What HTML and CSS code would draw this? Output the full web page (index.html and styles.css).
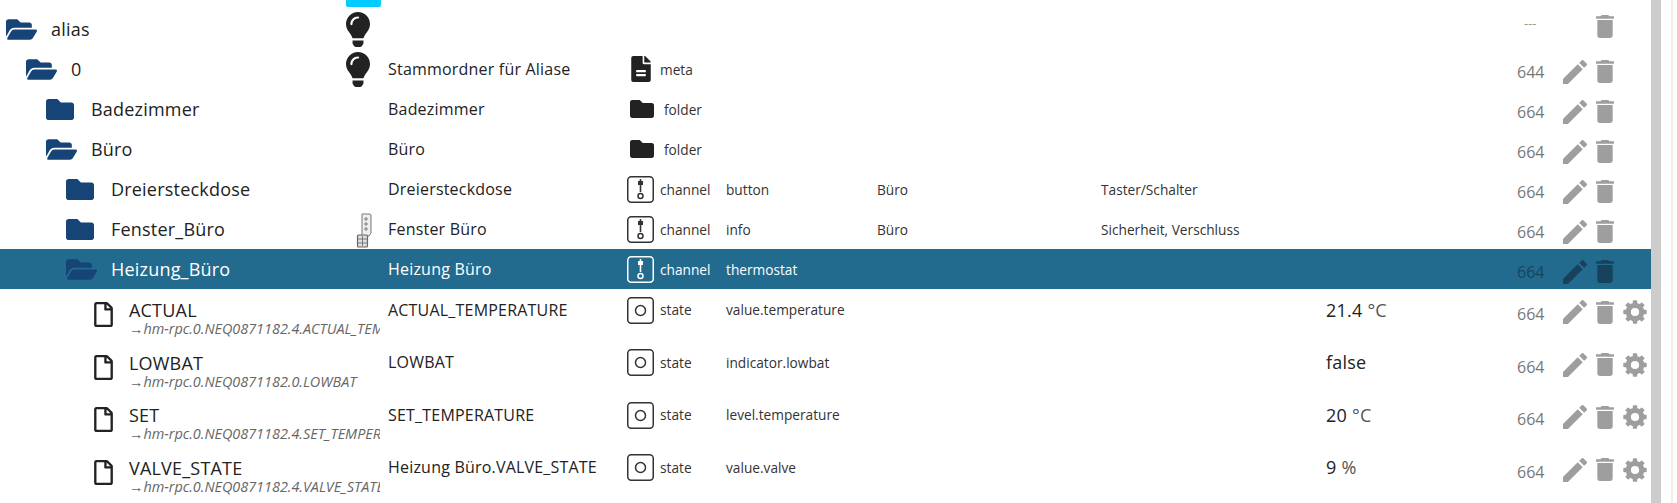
FILE: index.html
```html
<!DOCTYPE html>
<html lang="de">
<head>
<meta charset="utf-8">
<title>Objekte</title>
<link rel="stylesheet" href="styles.css">
</head>
<body>
<svg class="defs" aria-hidden="true">
  <defs>
    <symbol id="folder" viewBox="0 0 512 384"><path d="M464 64H272L208 0H48C21.49 0 0 21.49 0 48v288c0 26.51 21.49 48 48 48h416c26.51 0 48-21.49 48-48V112c0-26.51-21.49-48-48-48z"/></symbol>
    <symbol id="open" viewBox="0 64 576 384"><path d="M572.694 292.093L500.27 416.248A63.997 63.997 0 0 1 444.989 448H45.025c-18.523 0-30.064-20.093-20.731-36.093l72.424-124.155A64 64 0 0 1 152 256h399.964c18.523 0 30.064 20.093 20.73 36.093zM152 224h328v-48c0-26.51-21.49-48-48-48H272l-64-64H48C21.49 64 0 85.49 0 112v278.046l69.077-118.418C86.214 242.25 117.989 224 152 224z"/></symbol>
    <symbol id="file" viewBox="0 0 384 512"><path d="M369.9 97.9L286 14C277 5 264.8-.1 252.1-.1H48C21.5 0 0 21.5 0 48v416c0 26.5 21.5 48 48 48h288c26.5 0 48-21.5 48-48V131.9c0-12.7-5.1-25-14.1-34zM332.1 128H256V51.9l76.1 76.1zM48 464V48h160v104c0 13.3 10.7 24 24 24h104v288H48z"/></symbol>
    <symbol id="bulb" viewBox="0 0 352 512"><path d="M96.06 454.35c.01 6.29 1.87 12.45 5.36 17.69l17.09 25.69a31.99 31.99 0 0 0 26.64 14.28h61.71a31.99 31.99 0 0 0 26.64-14.28l17.09-25.69a31.989 31.989 0 0 0 5.36-17.69l.04-38.35H96.01l.05 38.35zM0 176c0 44.37 16.45 84.85 43.56 115.78 16.52 18.85 42.36 58.23 52.21 91.45.04.26.07.52.11.78h160.24c.04-.26.07-.51.11-.78 9.85-33.22 35.69-72.6 52.21-91.45C335.55 260.85 352 220.37 352 176 352 78.61 272.91-.3 175.45 0 73.44.31 0 82.97 0 176zm176-80c-44.11 0-80 35.89-80 80 0 8.84-7.16 16-16 16s-16-7.16-16-16c0-61.76 50.24-112 112-112 8.84 0 16 7.16 16 16s-7.16 16-16 16z"/></symbol>
    <symbol id="meta" viewBox="0 0 384 512"><path d="M224 136V0H40C18 0 0 18 0 40v432c0 22 18 40 40 40h304c22 0 40-18 40-40V160H248c-13.2 0-24-10.800-24-24zm64 250c0 6.600-5.400 12-12 12H108c-6.600 0-12-5.400-12-12v-22c0-6.600 5.400-12 12-12h168c6.600 0 12 5.400 12 12v22zm0-76c0 6.600-5.400 12-12 12H108c-6.600 0-12-5.400-12-12v-22c0-6.600 5.400-12 12-12h168c6.600 0 12 5.400 12 12v22zm96-189v7H256V0h6.100c6.400 0 12.500 2.500 17 7l97.900 98c4.500 4.500 7 10.600 7 16z"/></symbol>
    <symbol id="channel" viewBox="0 0 27 27"><rect x=".75" y=".75" width="25.5" height="25.5" rx="3.5" fill="none" stroke="currentColor" stroke-width="1.5"/><rect x="11" y="5" width="5" height="4" fill="currentColor"/><path d="M13.5 3v13" stroke="currentColor" stroke-width="1.6"/><circle cx="13.5" cy="20" r="2.5" fill="none" stroke="currentColor" stroke-width="1.5"/></symbol>
    <symbol id="state" viewBox="0 0 27 27"><rect x=".75" y=".75" width="25.5" height="25.5" rx="3.500" fill="none" stroke="currentColor" stroke-width="1.5"/><circle cx="13.5" cy="13.5" r="5" fill="none" stroke="currentColor" stroke-width="1.5"/></symbol>
    <symbol id="edit" viewBox="3 3 18 18"><path d="M3 17.25V21h3.75L17.81 9.94l-3.75-3.75L3 17.25zM20.71 7.04c.39-.39.39-1.02 0-1.41l-2.34-2.34c-.39-.39-1.02-.39-1.41 0l-1.83 1.83 3.75 3.75 1.83-1.83z"/></symbol>
    <symbol id="trash" viewBox="5 3 14 18"><path d="M6 19c0 1.1.9 2 2 2h8c1.1 0 2-.9 2-2V7H6v12zM19 4h-3.5l-1-1h-5l-1 1H5v2h14V4z"/></symbol>
    <symbol id="gear" viewBox="0 0 24 24">
      <circle cx="12" cy="12" r="6.7" fill="none" stroke="currentColor" stroke-width="5.2"/>
      <g fill="currentColor">
        <rect x="9.800" y=".3" width="4.400" height="4.500" rx=".7"/>
        <rect x="9.800" y=".3" width="4.400" height="4.500" rx=".7" transform="rotate(45 12 12)"/>
        <rect x="9.800" y=".3" width="4.400" height="4.500" rx=".7" transform="rotate(90 12 12)"/>
        <rect x="9.800" y=".3" width="4.400" height="4.500" rx=".7" transform="rotate(135 12 12)"/>
        <rect x="9.800" y=".3" width="4.400" height="4.500" rx=".7" transform="rotate(180 12 12)"/>
        <rect x="9.800" y=".3" width="4.400" height="4.500" rx=".7" transform="rotate(225 12 12)"/>
        <rect x="9.800" y=".3" width="4.400" height="4.500" rx=".7" transform="rotate(270 12 12)"/>
        <rect x="9.800" y=".3" width="4.400" height="4.500" rx=".7" transform="rotate(315 12 12)"/>
      </g>
    </symbol>
  </defs>
</svg>
<div class="page">
<main class="tree">
  <div class="top"><span class="badge"></span></div>

  <div class="row">
    <div class="id l0"><svg class="ic-open"><use href="#open"/></svg><span>alias</span></div>
    <div class="devicon"><svg class="ic-bulb"><use href="#bulb"/></svg></div>
    <div class="title"></div><div class="ty"></div><div class="tt"></div><div class="role"></div><div class="room"></div><div class="fn"></div><div class="val"></div>
    <div class="acl dash">---</div>
    <div class="btns btns-up"><span class="sp"></span><svg class="ic-trash"><use href="#trash"/></svg></div>
  </div>

  <div class="row">
    <div class="id l1"><svg class="ic-open"><use href="#open"/></svg><span>0</span></div>
    <div class="devicon"><svg class="ic-bulb"><use href="#bulb"/></svg></div>
    <div class="title">Stammordner für Aliase</div>
    <div class="ty"><svg class="ic-meta"><use href="#meta"/></svg></div><div class="tt">meta</div><div class="role"></div><div class="room"></div><div class="fn"></div><div class="val"></div>
    <div class="acl">644</div>
    <div class="btns"><svg class="ic-edit"><use href="#edit"/></svg><svg class="ic-trash"><use href="#trash"/></svg></div>
  </div>

  <div class="row">
    <div class="id l2"><svg class="ic-folder"><use href="#folder"/></svg><span>Badezimmer</span></div>
    <div class="devicon"></div>
    <div class="title">Badezimmer</div>
    <div class="ty"><svg class="ic-tfolder"><use href="#folder"/></svg></div><div class="tt tt-f">folder</div><div class="role"></div><div class="room"></div><div class="fn"></div><div class="val"></div>
    <div class="acl">664</div>
    <div class="btns"><svg class="ic-edit"><use href="#edit"/></svg><svg class="ic-trash"><use href="#trash"/></svg></div>
  </div>

  <div class="row">
    <div class="id l2"><svg class="ic-open"><use href="#open"/></svg><span>Büro</span></div>
    <div class="devicon"></div>
    <div class="title">Büro</div>
    <div class="ty"><svg class="ic-tfolder"><use href="#folder"/></svg></div><div class="tt tt-f">folder</div><div class="role"></div><div class="room"></div><div class="fn"></div><div class="val"></div>
    <div class="acl">664</div>
    <div class="btns"><svg class="ic-edit"><use href="#edit"/></svg><svg class="ic-trash"><use href="#trash"/></svg></div>
  </div>

  <div class="row">
    <div class="id l3"><svg class="ic-folder"><use href="#folder"/></svg><span>Dreiersteckdose</span></div>
    <div class="devicon"></div>
    <div class="title">Dreiersteckdose</div>
    <div class="ty"><svg class="ic-box"><use href="#channel"/></svg></div><div class="tt">channel</div><div class="role">button</div><div class="room">Büro</div><div class="fn">Taster/Schalter</div><div class="val"></div>
    <div class="acl">664</div>
    <div class="btns"><svg class="ic-edit"><use href="#edit"/></svg><svg class="ic-trash"><use href="#trash"/></svg></div>
  </div>

  <div class="row">
    <div class="id l3"><svg class="ic-folder"><use href="#folder"/></svg><span>Fenster_Büro</span></div>
    <div class="devicon">
      <svg class="ic-window" viewBox="0 0 16 35">
        <path d="M6 1h8l1 1v18l-2 3H6z" fill="#eee" stroke="#777" stroke-width="1"/>
        <circle cx="10" cy="6" r="1.2" fill="none" stroke="#555" stroke-width=".8"/>
        <circle cx="10" cy="11" r="1.2" fill="none" stroke="#555" stroke-width=".8"/>
        <circle cx="10" cy="16" r="1.2" fill="none" stroke="#555" stroke-width=".8"/>
        <rect x="1.5" y="22" width="10" height="12" rx="1" fill="#ddd" stroke="#666" stroke-width="1.2"/>
        <path d="M2 26h9M2 30h9M6.500 23v10" stroke="#666" stroke-width=".8"/>
      </svg>
    </div>
    <div class="title">Fenster Büro</div>
    <div class="ty"><svg class="ic-box"><use href="#channel"/></svg></div><div class="tt">channel</div><div class="role">info</div><div class="room">Büro</div><div class="fn">Sicherheit, Verschluss</div><div class="val"></div>
    <div class="acl">664</div>
    <div class="btns"><svg class="ic-edit"><use href="#edit"/></svg><svg class="ic-trash"><use href="#trash"/></svg></div>
  </div>

  <div class="row selected">
    <div class="id l3"><svg class="ic-open"><use href="#open"/></svg><span>Heizung_Büro</span></div>
    <div class="devicon"></div>
    <div class="title">Heizung Büro</div>
    <div class="ty"><svg class="ic-box"><use href="#channel"/></svg></div><div class="tt">channel</div><div class="role">thermostat</div><div class="room"></div><div class="fn"></div><div class="val"></div>
    <div class="acl">664</div>
    <div class="btns"><svg class="ic-edit"><use href="#edit"/></svg><svg class="ic-trash"><use href="#trash"/></svg></div>
  </div>

  <div class="row state">
    <div class="id l4"><svg class="ic-file"><use href="#file"/></svg><div class="stack"><span>ACTUAL</span><em>→hm-rpc.0.NEQ0871182.4.ACTUAL_TEMPERATURE</em></div></div>
    <div class="devicon"></div>
    <div class="title">ACTUAL_TEMPERATURE</div>
    <div class="ty"><svg class="ic-box"><use href="#state"/></svg></div><div class="tt">state</div><div class="role">value.temperature</div><div class="room"></div><div class="fn"></div><div class="val">21.4 <small>°C</small></div>
    <div class="acl">664</div>
    <div class="btns"><svg class="ic-edit"><use href="#edit"/></svg><svg class="ic-trash"><use href="#trash"/></svg><svg class="ic-gear"><use href="#gear"/></svg></div>
  </div>

  <div class="row state">
    <div class="id l4"><svg class="ic-file"><use href="#file"/></svg><div class="stack"><span>LOWBAT</span><em>→hm-rpc.0.NEQ0871182.0.LOWBAT</em></div></div>
    <div class="devicon"></div>
    <div class="title">LOWBAT</div>
    <div class="ty"><svg class="ic-box"><use href="#state"/></svg></div><div class="tt">state</div><div class="role">indicator.lowbat</div><div class="room"></div><div class="fn"></div><div class="val">false</div>
    <div class="acl">664</div>
    <div class="btns"><svg class="ic-edit"><use href="#edit"/></svg><svg class="ic-trash"><use href="#trash"/></svg><svg class="ic-gear"><use href="#gear"/></svg></div>
  </div>

  <div class="row state">
    <div class="id l4"><svg class="ic-file"><use href="#file"/></svg><div class="stack"><span>SET</span><em>→hm-rpc.0.NEQ0871182.4.SET_TEMPERATURE</em></div></div>
    <div class="devicon"></div>
    <div class="title">SET_TEMPERATURE</div>
    <div class="ty"><svg class="ic-box"><use href="#state"/></svg></div><div class="tt">state</div><div class="role">level.temperature</div><div class="room"></div><div class="fn"></div><div class="val">20 <small>°C</small></div>
    <div class="acl">664</div>
    <div class="btns"><svg class="ic-edit"><use href="#edit"/></svg><svg class="ic-trash"><use href="#trash"/></svg><svg class="ic-gear"><use href="#gear"/></svg></div>
  </div>

  <div class="row state">
    <div class="id l4"><svg class="ic-file"><use href="#file"/></svg><div class="stack"><span>VALVE_STATE</span><em>→hm-rpc.0.NEQ0871182.4.VALVE_STATE</em></div></div>
    <div class="devicon"></div>
    <div class="title">Heizung Büro.VALVE_STATE</div>
    <div class="ty"><svg class="ic-box"><use href="#state"/></svg></div><div class="tt">state</div><div class="role">value.valve</div><div class="room"></div><div class="fn"></div><div class="val">9 <small>%</small></div>
    <div class="acl">664</div>
    <div class="btns"><svg class="ic-edit"><use href="#edit"/></svg><svg class="ic-trash"><use href="#trash"/></svg><svg class="ic-gear"><use href="#gear"/></svg></div>
  </div>
</main>
<div class="scrollbar"></div>
<div class="edge"></div>
</div>
</body>
</html>
```

FILE: styles.css
```css
* { box-sizing: border-box; }
html, body { margin: 0; height: 100%; overflow: hidden; background: #fff; }
body { font-family: "Open Sans", "Noto Sans", sans-serif; color: #222; }
.defs { width: 0; height: 0; display: block; }
.page { display: flex; height: 503px; }
.tree { width: 1651px; flex: none; }
.scrollbar { width: 10px; flex: none; background: #ccc; }
.edge { width: 2px; flex: none; margin-left: 10px; background: #eee; }

.top { height: 9px; padding-left: 346px; }
.badge { display: block; width: 35px; height: 7px; background: #00ccff; border-radius: 0 0 2px 2px; }

.row {
  display: grid;
  grid-template-columns: 346px 42px 239px 33px 66px 151px 224px 226px 190px 46px 1fr;
  height: 40px;
  align-items: center;
  font-size: 13.7px;
  white-space: nowrap;
}
.row > div { min-width: 0; }
.row.state { height: 52.5px; align-items: start; }
.row.state > div { height: 41px; display: flex; align-items: center; }
.row.selected { background: #236b8e; color: #fff; }

.id { display: flex; align-items: center; font-size: 18px; letter-spacing: .2px; }
.l0 { padding-left: 6px; }
.l1 { padding-left: 26px; }
.l2 { padding-left: 46px; }
.l3 { padding-left: 66px; }
.row.state .l4 { padding-left: 94px; align-items: flex-start; }
.id span { display: block; }

.stack { margin-left: 16px; padding-top: 9px; line-height: 24px; letter-spacing: 0; }
.stack span { letter-spacing: .2px; }
.stack em { display: block; width: 251px; overflow: hidden; font-size: 14.4px; line-height: 17px; margin-top: -2px; color: #666; }

.title { font-size: 16px; letter-spacing: .2px; }
.ty { display: flex; align-items: center; }
.tt, .role, .room, .fn { color: #333; }
.selected .tt, .selected .role { color: #fff; }
.tt-f { padding-left: 4px; }
.val { font-size: 18px; letter-spacing: .2px; margin-left: -1px; }
.val small { font-size: 18px; color: #555; margin-left: 5px; }
.acl { color: #777; font-size: 16px; padding-top: 6px; }
.row.state .acl { height: 44px; }
.selected .acl { color: #17425b; }
.dash { font-size: 13px; color: #999; padding-top: 0; margin-top: -12px; padding-left: 7px; }

.btns { display: flex; align-items: center; margin-top: 5px; }
.btns-up { margin-top: -5px; }
.row.state .btns { margin-top: 4px; height: 38px; }
.sp { width: 33px; flex: none; }

svg { display: block; flex: none; fill: currentColor; }
.ic-open { width: 31px; height: 21px; color: #164477; margin-right: 14px; }
.ic-folder { width: 28px; height: 21px; color: #164477; margin-right: 17px; }
.ic-file { width: 19px; height: 25px; color: #222; margin-top: 13px; }
.devicon { display: flex; align-items: center; height: 40px; }
.ic-bulb { width: 24px; height: 35px; color: #222; }
.ic-window { width: 16px; height: 35px; margin-left: 10px; margin-top: 2px; }
.ic-meta { width: 20px; height: 26px; margin-left: 4px; color: #222; }
.ic-tfolder { width: 24px; height: 18px; margin-left: 3px; color: #222; }
.ic-box { width: 27px; height: 27px; color: #333; margin-top: 1px; }
.selected .ic-box { color: #fff; }
.ic-edit { width: 24px; height: 24px; color: #9e9e9e; margin-right: 9px; }
.ic-trash { width: 18px; height: 23px; color: #9e9e9e; }
.ic-gear { width: 24px; height: 24px; color: #9e9e9e; margin-left: 9px; }
.selected .ic-edit, .selected .ic-trash { color: #17425b; }
```
